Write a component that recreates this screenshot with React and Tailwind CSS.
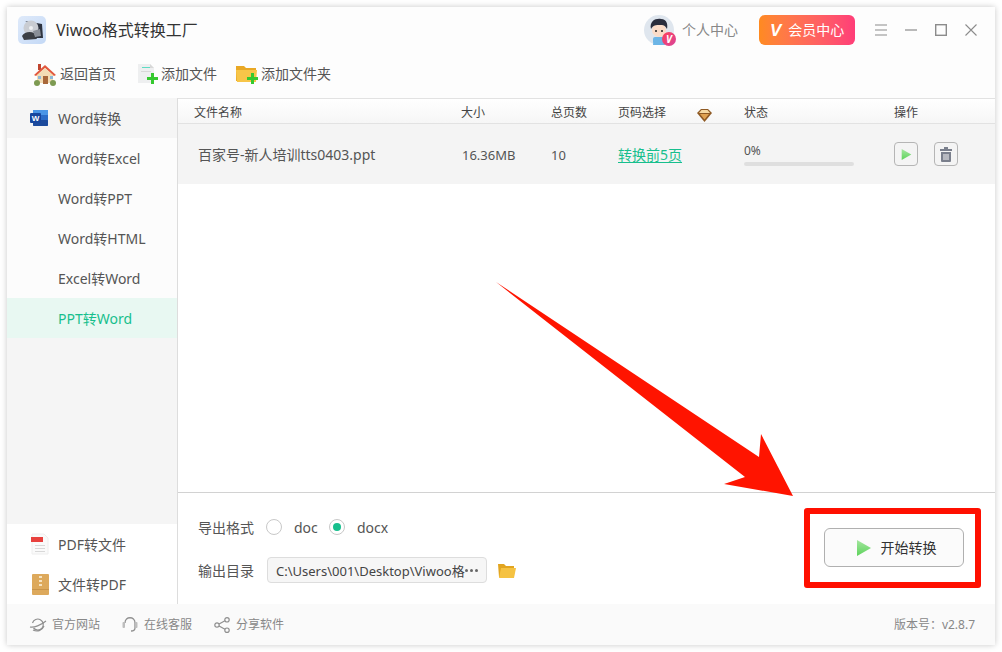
import React from "react";

const Logo = () => (
  <svg width="28" height="28" viewBox="0 0 28 28" className="shrink-0">
    <defs>
      <linearGradient id="lg" x1="0" y1="0" x2="1" y2="1">
        <stop offset="0" stopColor="#dfeafa" />
        <stop offset="1" stopColor="#c4d9f6" />
      </linearGradient>
    </defs>
    <rect width="28" height="28" rx="5" fill="url(#lg)" />
    <path d="M7 5 L24 8 L25 22 L18 22 L17 10 Z" fill="#2e3440" />
    <circle cx="13" cy="12" r="7.5" fill="#c9ccd2" />
    <circle cx="13" cy="12" r="2" fill="#eef0f3" />
    <path d="M4 20 C6 16 12 15 16 17 L19 23 L6 24 Z" fill="#3c3f45" />
    <path d="M15 15 L22 13 L23 20 L17 21 Z" fill="#8a8f98" />
  </svg>
);

const House = () => (
  <svg width="24" height="23" viewBox="0 0 24 23" className="shrink-0">
    <rect x="5" y="1" width="3" height="6" fill="#c0452f" />
    <rect x="4" y="10" width="16" height="10" fill="#f3dcb4" />
    <path d="M12 2 L23 12 L21 13 L12 5 L3 13 L1 12 Z" fill="#e2583e" />
    <path d="M12 5 L20 12 L20 13 L4 13 L4 12 Z" fill="#f3dcb4" />
    <rect x="10" y="13" width="5" height="8" fill="#a9683a" />
    <rect x="5" y="13" width="3" height="3" fill="#8fb8d8" />
    <rect x="17" y="13" width="3" height="3" fill="#8fb8d8" />
    <circle cx="4" cy="20" r="3" fill="#7d9a52" />
    <circle cx="20" cy="20" r="3" fill="#7d9a52" />
  </svg>
);

const Plus = ({ x, y }) => (
  <path d={`M${x + 4} ${y} h3 v4 h4 v3 h-4 v4 h-3 v-4 h-4 v-3 h4 z`} fill="#35c92f" />
);

const AddFile = () => (
  <svg width="22" height="22" viewBox="0 0 22 22" className="shrink-0">
    <path d="M1 1 H13 L17 5 V20 H1 Z" fill="#eeeff0" />
    <path d="M13 1 L17 5 H13 Z" fill="#d8d8d8" />
    <rect x="5" y="4" width="8" height="1" fill="#5fdcc4" />
    <rect x="4" y="8" width="10" height="1" fill="#d8d8d8" />
    <Plus x={10} y={10} />
  </svg>
);

const AddFolder = () => (
  <svg width="22" height="20" viewBox="0 0 22 20" className="shrink-0">
    <path d="M0 2 H8 L10 4 H20 V17 H0 Z" fill="#e9a825" />
    <path d="M0 6 H21 L20 18 H1 Z" fill="#f7c548" />
    <Plus x={11} y={9} />
  </svg>
);

const WordIcon = () => (
  <svg width="18" height="18" viewBox="0 0 18 18" className="shrink-0">
    <rect x="3" y="1" width="15" height="16" rx="1.5" fill="#2b6cc8" />
    <rect x="3" y="1" width="15" height="5" fill="#4a95e6" />
    <rect x="3" y="11" width="15" height="6" rx="1" fill="#1c4a9c" />
    <rect x="0" y="4" width="11" height="10" rx="1" fill="#17479e" />
    <text x="5.5" y="12" textAnchor="middle" fontSize="8" fontWeight="700" fill="#fff" fontFamily="'Liberation Sans', sans-serif">W</text>
  </svg>
);

const PdfIcon = () => (
  <svg width="18" height="22" viewBox="0 0 18 22" className="shrink-0">
    <path d="M1 1 H13 L17 5 V21 H1 Z" fill="#fafafa" stroke="#eeeeee" />
    <rect x="0" y="4" width="12" height="5" fill="#e8413e" />
    <rect x="4" y="12" width="10" height="1" fill="#d8d8d8" />
    <rect x="4" y="15" width="10" height="1" fill="#d8d8d8" />
    <rect x="4" y="18" width="10" height="1" fill="#d8d8d8" />
  </svg>
);

const ZipIcon = () => (
  <svg width="17" height="21" viewBox="0 0 17 21" className="shrink-0">
    <rect width="17" height="21" rx="1" fill="#dda95c" />
    <rect y="15" width="17" height="1" fill="#c9944a" />
    <rect x="7" y="2" width="3" height="2" fill="#f6e3c2" />
    <rect x="7" y="6" width="3" height="2" fill="#f6e3c2" />
    <rect x="7" y="10" width="3" height="2" fill="#f6e3c2" />
  </svg>
);

const Avatar = () => (
  <div className="relative w-[30px] h-[30px] shrink-0">
    <svg width="30" height="30" viewBox="0 0 30 30">
      <circle cx="15" cy="15" r="15" fill="#dfe6ee" />
      <path d="M9 30 C9 23 21 23 21 30 Z" fill="#6cb5e6" />
      <rect x="9" y="22" width="12" height="7" rx="2" fill="#6cb5e6" />
      <circle cx="15" cy="15" r="7" fill="#fbdcc8" />
      <path d="M7 14 C5 6 12 3 17 4 C23 4 24 10 23 14 C21 10 19 10 16 10 C12 10 9 10 7 14 Z" fill="#2a2e3d" />
      <circle cx="12" cy="16" r="1" fill="#222" />
      <circle cx="18" cy="16" r="1" fill="#222" />
    </svg>
    <div className="absolute right-[-2px] bottom-[-1px] w-[14px] h-[14px] rounded-full bg-gradient-to-br from-[#ff3d55] to-[#d8439a] flex items-center justify-center text-white text-[10px] font-bold italic leading-none">
      V
    </div>
  </div>
);

const PlayTri = ({ w, h }) => (
  <svg width={w} height={h} viewBox="0 0 16 18" className="shrink-0">
    <defs>
      <linearGradient id="pg" x1="0" y1="0" x2="0" y2="1">
        <stop offset="0" stopColor="#a5e6a0" />
        <stop offset="1" stopColor="#5dd35b" />
      </linearGradient>
    </defs>
    <path d="M1 1 L15 9 L1 17 Z" fill="url(#pg)" />
  </svg>
);

const Trash = () => (
  <svg width="12" height="15" viewBox="0 0 12 15">
    <rect x="4" y="0" width="4" height="2" fill="#7a7f8c" />
    <rect x="0" y="2" width="12" height="2" fill="#7a7f8c" />
    <path d="M1 5 H11 V14 a1 1 0 0 1 -1 1 H2 a1 1 0 0 1 -1 -1 Z" fill="#7a7f8c" />
    <rect x="3.5" y="7" width="1" height="6" fill="#f4f4f4" />
    <rect x="5.5" y="7" width="1" height="6" fill="#f4f4f4" />
    <rect x="7.5" y="7" width="1" height="6" fill="#f4f4f4" />
  </svg>
);

const Diamond = () => (
  <svg width="15" height="14" viewBox="0 0 15 14">
    <path d="M4 1 H11 L15 5 L7.5 14 L0 5 Z" fill="#8f5a24" />
    <path d="M4.5 2 H10.5 L13 5 H2 Z" fill="#f6d9a3" />
    <path d="M3 6 H12 L7.5 11.5 Z" fill="#e0a252" />
  </svg>
);

const Globe = () => (
  <svg width="18" height="16" viewBox="0 0 18 16" fill="none" stroke="#8f8f8f" strokeWidth="1.2">
    <path d="M3.5 6 a5.5 5.5 0 1 1 1 5" />
    <path d="M1 10 C5 11 12 8 17 4" />
    <path d="M4 13 C8 15 13 14 15 9" />
  </svg>
);

const Headset = () => (
  <svg width="16" height="17" viewBox="0 0 16 17" fill="none" stroke="#8f8f8f" strokeWidth="1.3">
    <path d="M3 7 C3 0 13 0 13 7 V12 C13 14 11 15 9 15" />
    <rect x="0.5" y="6" width="2.5" height="6" rx="1" fill="#bdbdbd" stroke="none" />
    <rect x="13" y="6" width="2.5" height="6" rx="1" fill="#bdbdbd" stroke="none" />
  </svg>
);

const Share = () => (
  <svg width="16" height="16" viewBox="0 0 16 16" fill="none" stroke="#8f8f8f" strokeWidth="1.2">
    <circle cx="3" cy="8" r="2.2" />
    <circle cx="13" cy="2.8" r="2.2" />
    <circle cx="13" cy="13.2" r="2.2" />
    <path d="M5 7 L11 3.8 M5 9 L11 12.2" />
  </svg>
);

const SideItem = ({ children, active }) => (
  <div
    className={
      "h-10 flex items-center pl-[51px] pt-[2px] text-sm " +
      (active ? "bg-[#e8f8f2] text-[#17bf8d]" : "bg-[#fcfcfc] text-[#555555]")
    }
  >
    {children}
  </div>
);

const FootLink = ({ icon, label, w }) => (
  <div className={"flex items-center " + w}>
    <span className="flex items-center justify-center">{icon}</span>
    <span>{label}</span>
  </div>
);

export default function App() {
  return (
    <div
      className="relative w-[1002px] h-[652px] bg-white p-[7px] overflow-hidden"
      style={{ fontFamily: '"Noto Sans", "Noto Sans CJK SC", "Liberation Sans", sans-serif' }}
    >
      <div className="w-[988px] h-[638px] flex flex-col bg-white shadow-[0_0_6px_rgba(0,0,0,0.22)]">
        {/* title bar */}
        <div className="h-[46px] shrink-0 flex items-center bg-[#fdfdfd] pl-[11px] pr-[18px]">
          <Logo />
          <span className="ml-[10px] text-base text-[#333333]">Viwoo格式转换工厂</span>
          <div className="ml-auto flex items-center">
            <Avatar />
            <span className="ml-2 w-[77px] text-sm text-[#888888]">个人中心</span>
            <div className="w-24 h-[30px] rounded-md bg-gradient-to-r from-[#ff8a1f] to-[#ff3d78] flex items-center pl-[11px] gap-[7px] text-white text-sm">
              <span className="font-bold italic text-[17px] leading-none" style={{ fontFamily: '"Liberation Sans", sans-serif' }}>V</span>
              <span>会员中心</span>
            </div>
            <div className="ml-5 flex items-center gap-[18px]">
              <svg width="12" height="12" viewBox="0 0 12 12" stroke="#8c8c8c" strokeWidth="1.2"><path d="M0 1 H12 M0 6 H12 M0 11 H12" /></svg>
              <svg width="12" height="12" viewBox="0 0 12 12" stroke="#8c8c8c" strokeWidth="1.2"><path d="M0 6 H12" /></svg>
              <svg width="12" height="12" viewBox="0 0 12 12" stroke="#8c8c8c" strokeWidth="1.4" fill="none"><rect x="0.7" y="0.7" width="10.6" height="10.6" /></svg>
              <svg width="12" height="12" viewBox="0 0 12 12" stroke="#8c8c8c" strokeWidth="1.1"><path d="M0.5 0.5 L11.5 11.5 M11.5 0.5 L0.5 11.5" /></svg>
            </div>
          </div>
        </div>
        {/* toolbar */}
        <div className="h-[45px] shrink-0 flex items-center bg-[#fdfdfd] pl-[26px] pb-[3px] text-sm text-[#555555]">
          <House />
          <span className="ml-[3px]">返回首页</span>
          <span className="ml-[21px]"><AddFile /></span>
          <span className="ml-[2px]">添加文件</span>
          <span className="ml-[19px]"><AddFolder /></span>
          <span className="ml-[3px]">添加文件夹</span>
        </div>
        {/* body */}
        <div className="flex-1 min-h-0 flex">
          {/* sidebar */}
          <div className="w-[171px] shrink-0 flex flex-col border-r border-[#dddddd]">
            <div className="h-10 flex items-center bg-[#f5f5f5] pl-[23px] gap-[10px] text-sm text-[#555555]">
              <WordIcon />
              <span className="pt-[2px]">Word转换</span>
            </div>
            <SideItem>Word转Excel</SideItem>
            <SideItem>Word转PPT</SideItem>
            <SideItem>Word转HTML</SideItem>
            <SideItem>Excel转Word</SideItem>
            <SideItem active>PPT转Word</SideItem>
            <div className="flex-1 bg-[#f5f5f5]" />
            <div className="h-10 flex items-center pl-[24px] gap-[9px] text-sm text-[#555555] bg-white">
              <PdfIcon />
              <span className="pt-[2px]">PDF转文件</span>
            </div>
            <div className="h-10 flex items-center pl-[25px] gap-[9px] text-sm text-[#555555] bg-white">
              <ZipIcon />
              <span className="pt-[2px]">文件转PDF</span>
            </div>
          </div>
          {/* main */}
          <div className="flex-1 min-w-0 flex flex-col">
            <div className="h-[26px] shrink-0 flex items-center pl-4 pt-[4px] text-xs text-[#444444] bg-gradient-to-b from-white to-[#f6f6f6] border-t border-b border-[#e2e2e2]">
              <span className="w-[267px]">文件名称</span>
              <span className="w-[90px]">大小</span>
              <span className="w-[67px]">总页数</span>
              <span className="w-[79px]">页码选择</span>
              <span className="w-[47px] flex pt-[4px]"><Diamond /></span>
              <span className="w-[150px]">状态</span>
              <span>操作</span>
            </div>
            <div className="h-[60px] shrink-0 flex items-center pl-5 text-sm text-[#555555] bg-[#f4f4f4]">
              <span className="w-[264px] pt-[2px]">百家号-新人培训tts0403.ppt</span>
              <span className="w-[89px] pt-[2px] text-[13px]">16.36MB</span>
              <span className="w-[67px] pt-[2px] text-[13px]">10</span>
              <span className="w-[126px] pt-[2px] text-[#17bf8d] underline underline-offset-2">转换前5页</span>
              <div className="w-[150px] flex flex-col">
                <span className="text-xs leading-[16px]">0%</span>
                <div className="mt-[3px] w-[110px] h-1 rounded-full bg-[#dfdfdf]" />
              </div>
              <div className="flex items-center gap-4">
                <div className="w-6 h-6 rounded-sm border border-[#b5b5b5] flex items-center justify-center"><PlayTri w={11} h={13} /></div>
                <div className="w-6 h-6 rounded-sm border border-[#b5b5b5] flex items-center justify-center"><Trash /></div>
              </div>
            </div>
            <div className="flex-1 bg-white" />
            <div className="h-[112px] shrink-0 flex items-center justify-between border-t border-[#d2d2d2] bg-white pl-5 pr-[31px]">
              <div className="flex flex-col gap-[17px] text-sm text-[#555555]">
                <div className="flex items-center h-[26px]">
                  <span className="w-[68px] pt-[2px]">导出格式</span>
                  <span className="w-4 h-4 rounded-full border border-[#c8c8c8] bg-white" />
                  <span className="ml-3 w-[35px] pt-[2px]">doc</span>
                  <span className="w-4 h-4 rounded-full border border-[#c8c8c8] flex items-center justify-center">
                    <span className="w-2 h-2 rounded-full bg-[#17bf8d]" />
                  </span>
                  <span className="ml-3 pt-[2px]">docx</span>
                </div>
                <div className="flex items-center h-[26px]">
                  <span className="w-[69px] pt-[2px]">输出目录</span>
                  <div className="w-[220px] h-[26px] flex items-center rounded-sm border border-[#dddddd] bg-[#f6f6f6] pl-2 text-[13px] text-[#444444]">
                    <span className="w-[189px] pt-[2px] overflow-hidden whitespace-nowrap">C:\Users\001\Desktop\Viwoo格式</span>
                    <span className="flex gap-[2px]">
                      <span className="w-[3px] h-[3px] rounded-full bg-[#666666]" />
                      <span className="w-[3px] h-[3px] rounded-full bg-[#666666]" />
                      <span className="w-[3px] h-[3px] rounded-full bg-[#666666]" />
                    </span>
                  </div>
                  <svg width="18" height="15" viewBox="0 0 18 15" className="ml-[11px]">
                    <path d="M0 1 H6 L8 3 H16 V14 H1 Z" fill="#e2a520" />
                    <path d="M3 5 H18 L16 15 H1 Z" fill="#f5c242" />
                  </svg>
                </div>
              </div>
              <div className="w-[140px] h-[39px] mb-[2px] pl-1 rounded-md border border-[#b0b0b0] bg-[#fbfbfb] flex items-center justify-center gap-[9px] text-sm text-[#333333]">
                <PlayTri w={16} h={18} />
                <span>开始转换</span>
              </div>
            </div>
          </div>
        </div>
        {/* footer */}
        <div className="h-[41px] shrink-0 flex items-center bg-[#fafafa] pl-[22px] pr-5 text-xs text-[#888888]">
          <FootLink icon={<Globe />} label={<span className="ml-[5px]">官方网站</span>} w="w-[93px]" />
          <FootLink icon={<Headset />} label={<span className="ml-[6px]">在线客服</span>} w="w-[92px]" />
          <FootLink icon={<Share />} label={<span className="ml-[6px]">分享软件</span>} w="" />
          <span className="ml-auto">版本号：v2.8.7</span>
        </div>
      </div>

      {/* annotation overlays */}
      <div className="absolute left-[804px] top-[508px] w-[177px] h-[80px] border-[6px] border-[#ff0f00] rounded-[3px] pointer-events-none" />
      <svg className="absolute left-0 top-0 pointer-events-none" width="1002" height="652" viewBox="0 0 1002 652">
        <path d="M496 282 L759 457 L761 434 L793 496 L724 484 L745 477 Z" fill="#ff1400" />
      </svg>
    </div>
  );
}
